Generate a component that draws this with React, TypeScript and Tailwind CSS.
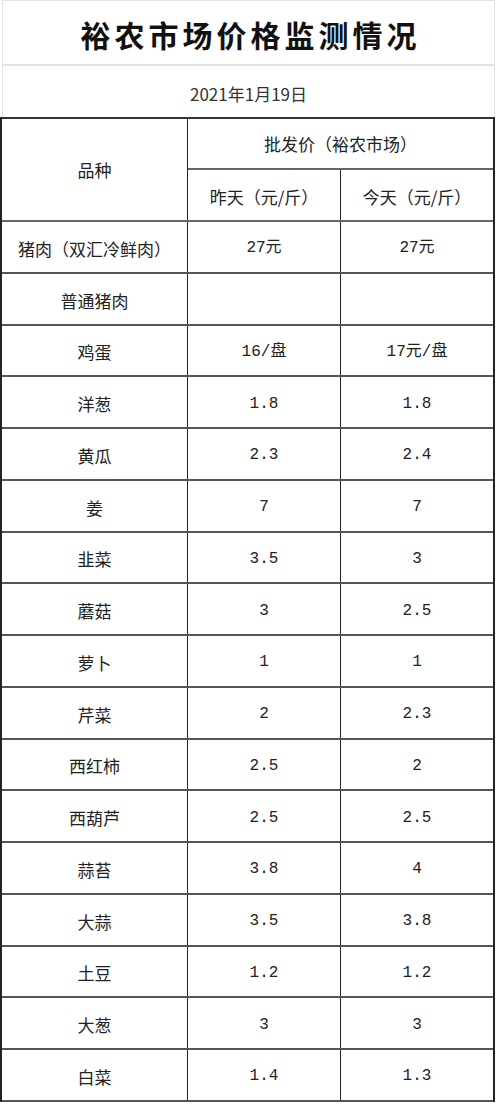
const rows: [string, string, string][] = [
  ["猪肉（双汇冷鲜肉）", "27元", "27元"],
  ["普通猪肉", "", ""],
  ["鸡蛋", "16/盘", "17元/盘"],
  ["洋葱", "1.8", "1.8"],
  ["黄瓜", "2.3", "2.4"],
  ["姜", "7", "7"],
  ["韭菜", "3.5", "3"],
  ["蘑菇", "3", "2.5"],
  ["萝卜", "1", "1"],
  ["芹菜", "2", "2.3"],
  ["西红柿", "2.5", "2"],
  ["西葫芦", "2.5", "2.5"],
  ["蒜苔", "3.8", "4"],
  ["大蒜", "3.5", "3.8"],
  ["土豆", "1.2", "1.2"],
  ["大葱", "3", "3"],
  ["白菜", "1.4", "1.3"],
];

const cjk = "font-['Noto_Sans_CJK_SC','Noto_Sans',sans-serif]";
const mono = "font-['Liberation_Mono','Noto_Sans_CJK_SC',monospace]";

export default function App() {
  return (
    <div className={`w-[500px] h-[1105px] bg-white text-[#222] ${cjk}`}>
      {/* title + date */}
      <div className="ml-[2px] w-[493px]">
        <div className="h-[66px] border-t border-x border-b-2 border-[#e2e2e2] flex items-center justify-center pt-[3px]">
          <h1 className="text-[30px] font-bold leading-none tracking-[4px] pl-[4px] text-[#111]">
            裕农市场价格监测情况
          </h1>
        </div>
        <div className="h-[51px] border-x border-[#e2e2e2] flex items-center justify-center pt-[4px]">
          <span className="text-[17px] leading-none text-[#333]">2021年1月19日</span>
        </div>
      </div>

      {/* table */}
      <div className="w-[495px] border-l-2 border-r-2 border-t-2 border-t-[#333] border-x-[#222]">
        {/* header */}
        <div className="flex h-[103px] border-b-2 border-[#666]">
          <div className="w-[186px] border-r border-[#222] flex items-center justify-center">
            <span className="text-[17px] leading-none">品种</span>
          </div>
          <div className="flex-1 flex flex-col">
            <div className="h-[51px] border-b-2 border-[#666] flex items-center justify-center">
              <span className="text-[17px] leading-none">批发价（裕农市场）</span>
            </div>
            <div className="flex-1 flex">
              <div className="w-[153px] border-r border-[#222] flex items-center justify-center pt-[2px]">
                <span className="text-[17px] leading-none">昨天（元/斤）</span>
              </div>
              <div className="flex-1 flex items-center justify-center pt-[2px]">
                <span className="text-[17px] leading-none">今天（元/斤）</span>
              </div>
            </div>
          </div>
        </div>

        {/* body */}
        {rows.map(([name, yesterday, today]) => (
          <div key={name} className="flex h-[51.76px] border-b-2 border-[#555]">
            <div className="w-[186px] border-r border-[#222] flex items-center justify-center pt-[3px]">
              <span className="text-[17px] leading-none">{name}</span>
            </div>
            <div className="w-[153px] border-r border-[#222] flex items-center justify-center pt-[3px]">
              <span className={`text-[16px] leading-none ${mono}`}>{yesterday}</span>
            </div>
            <div className="flex-1 flex items-center justify-center pt-[3px]">
              <span className={`text-[16px] leading-none ${mono}`}>{today}</span>
            </div>
          </div>
        ))}
      </div>
    </div>
  );
}
